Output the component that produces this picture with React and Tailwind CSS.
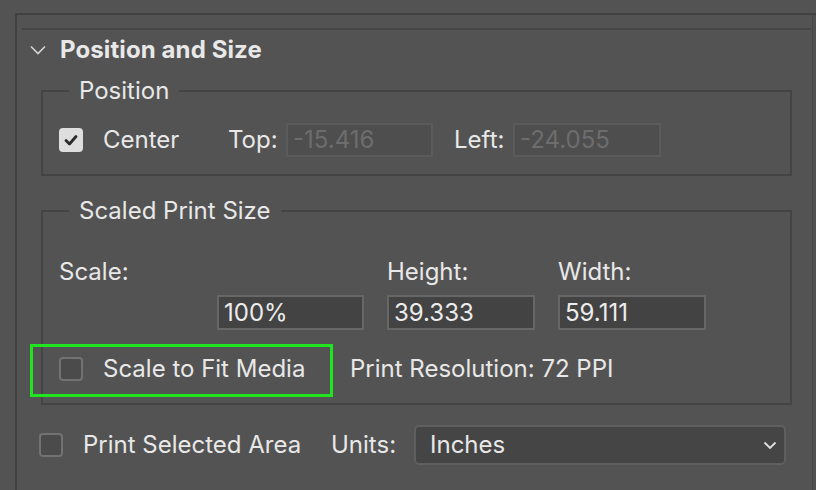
import React from 'react';

const Checkbox = ({ checked }) =>
  checked ? (
    <div className="flex h-[24px] w-[24px] shrink-0 items-center justify-center rounded-[4px] bg-[#dedede]">
      <svg width="16" height="16" viewBox="0 0 16 16" fill="none">
        <path d="M3 8.5 L6.5 12 L13 4.5" stroke="#2b2b2b" strokeWidth="2.8" strokeLinecap="round" strokeLinejoin="round" />
      </svg>
    </div>
  ) : (
    <div className="h-[24px] w-[24px] shrink-0 rounded-[4px] border-2 border-[#727272] bg-[#4b4b4b]" />
  );

const ValueBox = ({ value, width, disabled }) => (
  <div
    className={
      disabled
        ? 'flex h-[34px] items-center border-2 border-[#5b5b5b] bg-[#4e4e4e] pl-[5px] text-[#6d6d6d]'
        : 'flex h-[35px] items-center border-2 border-[#676767] bg-[#434343] pl-[5px] text-[#ececec]'
    }
    style={{ width }}
  >
    {value}
  </div>
);

export default function App() {
  return (
    <div className="h-[490px] w-[816px] overflow-hidden bg-[#535353] font-['Inter',sans-serif] text-[24px] leading-[24px] text-[#e8e8e8]">
      <div className="ml-[15px] mt-[13px] flex h-full border-l-2 border-t-2 border-[#414141]">
        <div className="flex-1">
          <div className="ml-[5px] mr-[1px] mt-[13px] border-t-2 border-[#464646]" />

          {/* section header */}
          <div className="mt-[8px] flex h-[24px] items-center">
            <svg className="ml-[13px]" width="16" height="10" viewBox="0 0 16 10" fill="none">
              <path d="M1 1.5 L8 8.5 L15 1.5" stroke="#d6d6d6" strokeWidth="1.6" />
            </svg>
            <span className="ml-[14px] text-[24px] font-bold tracking-[0.1px]">Position and Size</span>
          </div>

          {/* Position */}
          <fieldset className="ml-[24px] mt-[17px] w-[751px] border-2 border-[#444444] pb-[17px] pl-[16px]">
            <legend className="ml-[10px] px-[10px] leading-[24px]">Position</legend>
            <div className="mt-[20px] flex h-[34px] items-center">
              <Checkbox checked />
              <span className="ml-[20px] w-[125px]">Center</span>
              <span className="w-[58px]">Top:</span>
              <ValueBox value="-15.416" width={147} disabled />
              <span className="ml-[21px] w-[59px]">Left:</span>
              <ValueBox value="-24.055" width={148} disabled />
            </div>
          </fieldset>

          {/* Scaled Print Size */}
          <fieldset className="relative ml-[24px] mt-[23px] w-[751px] border-2 border-[#444444] pb-[22px] pl-[16px]">
            <legend className="ml-[10px] px-[10px] leading-[24px]">Scaled Print Size</legend>
            <div className="mt-[37px] flex h-[24px] items-center">
              <span className="w-[328px]">Scale:</span>
              <span className="w-[171px]">Height:</span>
              <span>Width:</span>
            </div>
            <div className="mt-[11px] flex">
              <div className="ml-[158px]">
                <ValueBox value="100%" width={147} />
              </div>
              <div className="ml-[23px]">
                <ValueBox value="39.333" width={148} />
              </div>
              <div className="ml-[23px]">
                <ValueBox value="59.111" width={148} />
              </div>
            </div>
            <div className="relative mt-[27px] flex h-[24px] items-center">
              <div className="absolute left-[-29px] top-[-13px] h-[53px] w-[303px] border-[3px] border-[#1fe41f]" />
              <Checkbox />
              <span className="ml-[20px] w-[247px]">Scale to Fit Media</span>
              <span>Print Resolution: 72 PPI</span>
            </div>
          </fieldset>

          {/* bottom row */}
          <div className="mt-[20px] flex h-[40px] items-center">
            <div className="ml-[22px]">
              <Checkbox />
            </div>
            <span className="ml-[20px] w-[248px]">Print Selected Area</span>
            <span className="w-[83px]">Units:</span>
            <div className="flex h-[40px] w-[372px] items-center justify-between rounded-[5px] border-2 border-[#5f5f5f] bg-[#454545] pl-[14px] pr-[7px]">
              <span>Inches</span>
              <svg width="14" height="9" viewBox="0 0 14 9" fill="none">
                <path d="M1.5 1.5 L7 7 L12.5 1.5" stroke="#e0e0e0" strokeWidth="1.8" />
              </svg>
            </div>
          </div>
        </div>
        <div className="w-[4px] border-l border-[#484848] bg-[#505050]" />
      </div>
    </div>
  );
}
